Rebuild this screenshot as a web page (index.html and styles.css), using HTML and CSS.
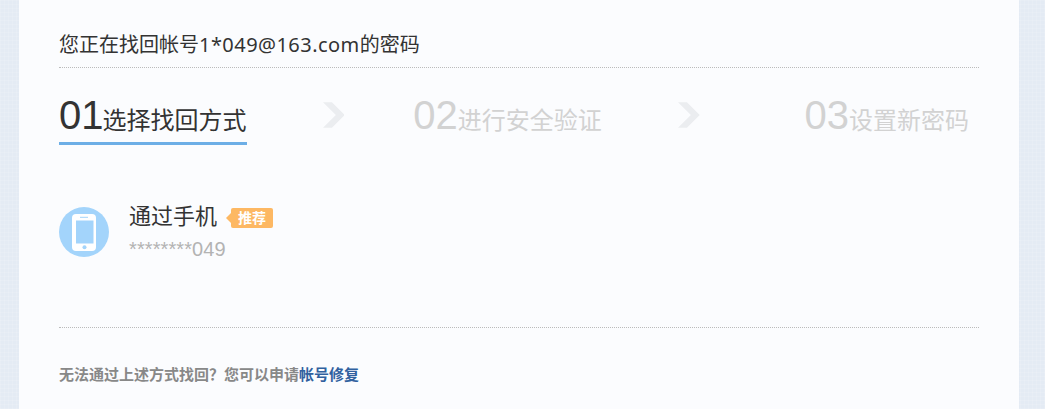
FILE: index.html
```html
<!DOCTYPE html>
<html>
<head>
    <title>找回密码</title>
    <link rel="stylesheet" href="styles.css">
</head>
<body>
    <div class="container">
        <div class="account-title">您正在找回帐号<span class="account-mail">1*049@163.com</span>的密码</div>

        <div class="steps">
            <div class="step step-active">
                <span class="step-num">01</span><span class="step-text">选择找回方式</span>
            </div>
            <svg class="step-arrow" viewBox="0 0 22 26"><path d="M0 0h9l13 13-13 13H0l13-13z"/></svg>
            <div class="step">
                <span class="step-num">02</span><span class="step-text">进行安全验证</span>
            </div>
            <svg class="step-arrow" viewBox="0 0 22 26"><path d="M0 0h9l13 13-13 13H0l13-13z"/></svg>
            <div class="step step-last">
                <span class="step-num">03</span><span class="step-text">设置新密码</span>
            </div>
        </div>

        <div class="method">
            <svg class="method-icon" viewBox="0 0 50 50">
                <circle cx="25" cy="25" r="25" fill="#a3d4fb"/>
                <rect x="13" y="7" width="24" height="37" rx="4" fill="#fff"/>
                <rect x="17" y="13.500" width="17.500" height="23" fill="#a3d4fb"/>
                <circle cx="25.500" cy="40.300" r="2" fill="#a3d4fb"/>
                <rect x="21" y="9.800" width="8" height="1" fill="#a3d4fb"/>
            </svg>
            <div class="method-info">
                <div class="method-name">通过手机<span class="badge">推荐</span></div>
                <div class="method-value">********049</div>
            </div>
        </div>

        <div class="footer-note">无法通过上述方式找回？您可以申请<a href="#">帐号修复</a></div>
    </div>
</body>
</html>
```

FILE: styles.css
```css
body {
    margin: 0;
    height: 409px;
    overflow: hidden;
    background-color: #e4ebf4;
    background-image:
        repeating-linear-gradient(90deg, rgba(255, 255, 255, 0.12) 0, rgba(255, 255, 255, 0.12) 1px, transparent 1px, transparent 4px),
        repeating-linear-gradient(0deg, rgba(255, 255, 255, 0.12) 0, rgba(255, 255, 255, 0.12) 1px, transparent 1px, transparent 4px);
    font-family: "Liberation Sans", "Noto Sans CJK SC", sans-serif;
}

.container {
    box-sizing: border-box;
    width: 1000px;
    height: 409px;
    margin-left: 19px;
    padding: 0 40px;
    background-color: #fbfcfe;
}

.account-title {
    box-sizing: border-box;
    height: 68px;
    padding-top: 33px;
    font-family: "Noto Sans", "Noto Sans CJK SC", sans-serif;
    font-size: 20px;
    line-height: 24px;
    color: #333;
    border-bottom: 1px dotted #bbb;
}

.account-mail {
    letter-spacing: 0.45px;
}

.steps {
    display: flex;
    align-items: flex-start;
    height: 77px;
    padding-right: 10px;
}

.step {
    box-sizing: border-box;
    height: 77px;
    padding-top: 24px;
    line-height: 46px;
    color: #d2d2d2;
    white-space: nowrap;
}

.step-active {
    color: #333;
    border-bottom: 3px solid #6caee6;
}

.step-active .step-num {
    margin-right: -1px;
}

.step-num {
    font-size: 40px;
}

.step-text {
    font-size: 24px;
}

.step-arrow {
    width: 22px;
    height: 26px;
    margin: 34px 69px 0 76px;
    fill: #ebedf0;
}

.step-arrow + .step-last {
    margin-left: 36px;
}

.method {
    display: flex;
    align-items: flex-start;
    height: 183px;
    padding-top: 58px;
    box-sizing: border-box;
    border-bottom: 1px dotted #bbb;
}

.method-icon {
    width: 50px;
    height: 50px;
    margin-top: 4px;
    margin-right: 20px;
}

.method-name {
    display: flex;
    align-items: center;
    font-size: 22px;
    line-height: 28px;
    color: #333;
}

.badge {
    position: relative;
    width: 35px;
    height: 20px;
    margin-top: 2px;
    margin-left: 14px;
    padding-left: 7px;
    font-size: 14px;
    font-weight: bold;
    line-height: 20px;
    color: #fff;
    background-color: #fdb863;
    border-radius: 2px;
}

.badge::before {
    content: "";
    position: absolute;
    left: -5px;
    top: 5px;
    border-top: 5px solid transparent;
    border-bottom: 5px solid transparent;
    border-right: 5px solid #fdb863;
}

.method-value {
    margin-top: 4px;
    font-size: 20px;
    line-height: 28px;
    letter-spacing: 0.1px;
    color: #b3b3b3;
}

.footer-note {
    padding-top: 37px;
    font-size: 15px;
    font-weight: bold;
    line-height: 20px;
    color: #888;
}

.footer-note a {
    color: #30619f;
    text-decoration: none;
}
```
